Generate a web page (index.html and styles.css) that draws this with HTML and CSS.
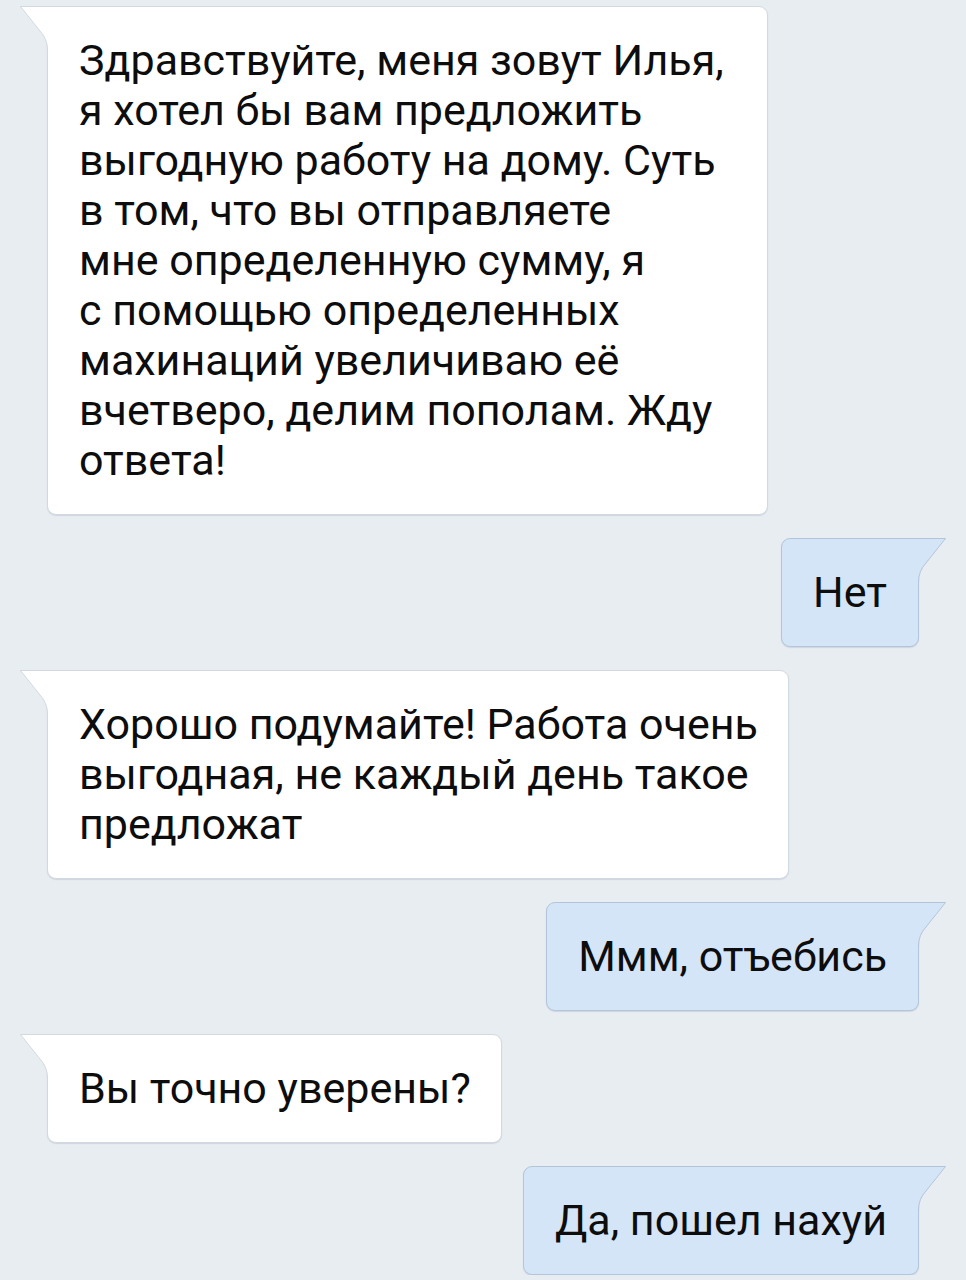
FILE: index.html
```html
<!DOCTYPE html>
<html lang="ru">
<head>
<meta charset="utf-8">
<link rel="stylesheet" href="styles.css">
</head>
<body>
<div class="chat">
  <div class="row in">
    <div class="bubble bubble-long">
      <svg class="tail" viewBox="0 0 34 50" width="34" height="50"><path class="tail-fill" d="M0.5,0.5 L20,25 Q27.5,33 27.5,44 L27.5,50 L34,50 L34,0.5 Z"/><path class="tail-line" d="M34,0.5 L0.5,0.5 L20,25 Q27.5,33 27.5,44 L27.5,50"/></svg>
      <p class="text">Здравствуйте, меня зовут Илья,<br>я хотел бы вам предложить<br>выгодную работу на дому. Суть<br>в том, что вы отправляете<br>мне определенную сумму, я<br>с помощью определенных<br>махинаций увеличиваю её<br>вчетверо, делим пополам. Жду<br>ответа!</p>
    </div>
  </div>
  <div class="row out">
    <div class="bubble">
      <svg class="tail" viewBox="0 0 34 50" width="34" height="50"><path class="tail-fill" d="M0.5,0.5 L20,25 Q27.5,33 27.5,44 L27.5,50 L34,50 L34,0.5 Z"/><path class="tail-line" d="M34,0.5 L0.5,0.5 L20,25 Q27.5,33 27.5,44 L27.5,50"/></svg>
      <p class="text">Нет</p>
    </div>
  </div>
  <div class="row in">
    <div class="bubble">
      <svg class="tail" viewBox="0 0 34 50" width="34" height="50"><path class="tail-fill" d="M0.5,0.5 L20,25 Q27.5,33 27.5,44 L27.5,50 L34,50 L34,0.5 Z"/><path class="tail-line" d="M34,0.5 L0.5,0.5 L20,25 Q27.5,33 27.5,44 L27.5,50"/></svg>
      <p class="text">Хорошо подумайте! Работа очень<br>выгодная, не каждый день такое<br>предложат</p>
    </div>
  </div>
  <div class="row out">
    <div class="bubble">
      <svg class="tail" viewBox="0 0 34 50" width="34" height="50"><path class="tail-fill" d="M0.5,0.5 L20,25 Q27.5,33 27.5,44 L27.5,50 L34,50 L34,0.5 Z"/><path class="tail-line" d="M34,0.5 L0.5,0.5 L20,25 Q27.5,33 27.5,44 L27.5,50"/></svg>
      <p class="text">Ммм, отъебись</p>
    </div>
  </div>
  <div class="row in">
    <div class="bubble">
      <svg class="tail" viewBox="0 0 34 50" width="34" height="50"><path class="tail-fill" d="M0.5,0.5 L20,25 Q27.5,33 27.5,44 L27.5,50 L34,50 L34,0.5 Z"/><path class="tail-line" d="M34,0.5 L0.5,0.5 L20,25 Q27.5,33 27.5,44 L27.5,50"/></svg>
      <p class="text">Вы точно уверены?</p>
    </div>
  </div>
  <div class="row out">
    <div class="bubble">
      <svg class="tail" viewBox="0 0 34 50" width="34" height="50"><path class="tail-fill" d="M0.5,0.5 L20,25 Q27.5,33 27.5,44 L27.5,50 L34,50 L34,0.5 Z"/><path class="tail-line" d="M34,0.5 L0.5,0.5 L20,25 Q27.5,33 27.5,44 L27.5,50"/></svg>
      <p class="text">Да, пошел нахуй</p>
    </div>
  </div>
</div>
</body>
</html>
```
FILE: styles.css
```css
html, body {
  margin: 0;
  padding: 0;
  background: #e8edf2;
}
.chat {
  display: flex;
  flex-direction: column;
  gap: 23px;
  padding: 6px 47px 0 47px;
  font-family: Roboto, "Noto Sans", sans-serif;
}
.row {
  display: flex;
}
.row.in { justify-content: flex-start; }
.row.out { justify-content: flex-end; }
.bubble {
  position: relative;
  border: 1px solid #d3d9e0;
  border-radius: 9px;
  background: #ffffff;
  padding: 28px 30px 29px 31px;
  box-shadow: 0 1px 1px rgba(160, 172, 188, 0.35);
}
.in .bubble { border-top-left-radius: 0; }
.in .bubble-long { padding-right: 43px; }
.out .bubble {
  background: #d5e5f8;
  border-color: #b3c5da;
  border-top-right-radius: 0;
  padding-left: 31px;
  padding-right: 31px;
}
.text {
  margin: 0;
  font-size: 43px;
  line-height: 50px;
  color: #0d0d0d;
  white-space: nowrap;
}
.tail {
  position: absolute;
  top: -1px;
  left: -28px;
  display: block;
}
.out .tail {
  left: auto;
  right: -28px;
  transform: scaleX(-1);
}
.tail-fill { fill: #ffffff; }
.tail-line { fill: none; stroke: #d3d9e0; stroke-width: 1; }
.out .tail-fill { fill: #d5e5f8; }
.out .tail-line { stroke: #b3c5da; }
```
